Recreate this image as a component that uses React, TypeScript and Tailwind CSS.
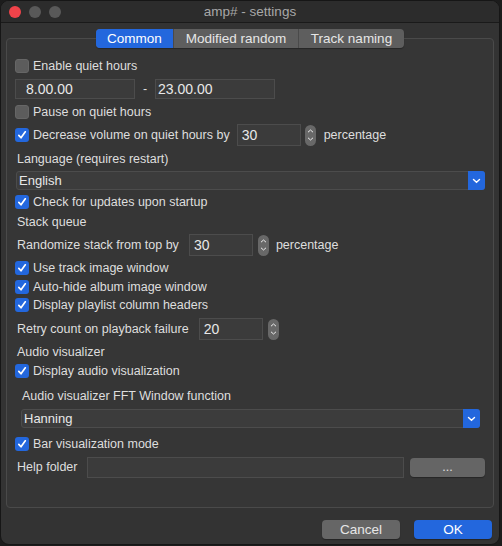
import { ReactNode } from "react";

const FONT = "font-['Liberation_Sans',Arial,sans-serif]";

const Check = ({ on }: { on?: boolean }) => {
  if (!on) {
    return (
      <div className="w-[14px] h-[14px] shrink-0 rounded-[3px] bg-[#5c5c5c] border border-[#666666]"></div>
    );
  }
  return (
    <div className="w-[14px] h-[14px] shrink-0 rounded-[3px] bg-[#2367dd] flex items-center justify-center">
      <svg width="10" height="10" viewBox="0 0 10 10">
        <path
          d="M1.8 5.4 L4 7.8 L8.3 1.8"
          fill="none"
          stroke="#fff"
          strokeWidth="1.7"
          strokeLinecap="round"
          strokeLinejoin="round"
        />
      </svg>
    </div>
  );
};

const CheckRow = ({
  on,
  label,
  className = "",
}: {
  on?: boolean;
  label: string;
  className?: string;
}) => (
  <div className={`flex items-center h-[18px] gap-[4px] ${className}`}>
    <Check on={on} />
    <span>{label}</span>
  </div>
);

// text box; value text is drawn a bit larger than labels, as in the dialog
const Field = ({
  value,
  className = "",
}: {
  value?: string;
  className?: string;
}) => (
  <div
    className={`flex items-center bg-[#3b3b3b] border border-[#4c4c4c] text-[14px] text-[#e8e8e8] ${className}`}
  >
    {value}
  </div>
);

const Spinner = () => (
  <div className="w-[11px] h-[21px] rounded-full bg-[#686868] flex flex-col items-center justify-center gap-[4px]">
    <svg width="7" height="4" viewBox="0 0 7 4">
      <path d="M1 3.2 L3.5 1 L6 3.2" fill="none" stroke="#ececec" strokeWidth="1" />
    </svg>
    <svg width="7" height="4" viewBox="0 0 7 4">
      <path d="M1 0.8 L3.5 3 L6 0.8" fill="none" stroke="#ececec" strokeWidth="1" />
    </svg>
  </div>
);

const Combo = ({ value, className = "" }: { value: string; className?: string }) => (
  <div
    className={`flex items-center h-[19px] bg-[#3c3c3c] border border-[#4c4c4c] rounded-[3px] ${className}`}
  >
    <span className="flex-1 pl-[2px] text-[13px] text-[#e8e8e8]">{value}</span>
    <div className="w-[17px] h-[19px] -mr-px rounded-r-[3px] bg-[#2367dd] flex items-center justify-center">
      <svg width="9" height="6" viewBox="0 0 9 6">
        <path
          d="M1.5 1.5 L4.5 4.3 L7.5 1.5"
          fill="none"
          stroke="#fff"
          strokeWidth="1.4"
          strokeLinecap="round"
        />
      </svg>
    </div>
  </div>
);

const Row = ({ children, className = "" }: { children: ReactNode; className?: string }) => (
  <div className={`flex items-center ${className}`}>{children}</div>
);

const Tab = ({ label, active, w }: { label: string; active?: boolean; w: string }) => (
  <div
    className={`h-[19px] flex items-center justify-center border-r border-[#4a4a4a] last:border-r-0 ${w} ${
      active ? "bg-[#2367dd] text-white" : "text-[#e6e6e6]"
    }`}
  >
    {label}
  </div>
);

export default function App() {
  return (
    <div
      className={`w-[502px] h-[546px] bg-[#1c1c1c] text-[12.5px] leading-none text-[#dedede] ${FONT}`}
    >
      <div className="w-[500px] h-[545px] rounded-[9px] bg-[#333333] border border-[#161616] overflow-hidden flex flex-col">
        {/* title bar */}
        <div className="h-[22px] shrink-0 bg-[#2c2c2c] border-b border-[#1a1a1a] flex items-center relative">
          <div className="flex gap-[8px] pl-[8px]">
            <div className="w-[12px] h-[12px] rounded-full bg-[#f0434a]"></div>
            <div className="w-[12px] h-[12px] rounded-full bg-[#595959]"></div>
            <div className="w-[12px] h-[12px] rounded-full bg-[#595959]"></div>
          </div>
          <div className="absolute inset-0 flex items-center justify-center text-[13.5px] text-[#a8a8a8]">
            amp# - settings
          </div>
        </div>

        <div className="px-[5px] pt-[6px] flex flex-col">
          {/* tabs */}
          <div className="flex justify-center relative z-10 -mb-[10px] text-[13.5px]">
            <div className="flex bg-[#5e5e5e] rounded-[4px] overflow-hidden shadow-[0_1px_1px_rgba(0,0,0,0.3)]">
              <Tab label="Common" active w="w-[78px]" />
              <Tab label="Modified random" w="w-[125px]" />
              <Tab label="Track naming" w="w-[105px]" />
            </div>
          </div>

          {/* group box */}
          <div className="h-[470px] border border-[#4a4a4a] rounded-[4px] bg-[#363636] pl-[8px] pr-[8px] pt-[18px] flex flex-col">
            <CheckRow label="Enable quiet hours" />
            <Row className="mt-[4px] h-[20px]">
              <Field value="8.00.00" className="w-[120px] h-[20px] pl-[10px]" />
              <span className="w-[20px] text-center">-</span>
              <Field value="23.00.00" className="w-[120px] h-[20px] pl-[2px]" />
            </Row>
            <CheckRow label="Pause on quiet hours" className="mt-[4px]" />
            <Row className="mt-[3px] h-[22px]">
              <CheckRow on label="Decrease volume on quiet hours by" />
              <Field value="30" className="ml-[7px] w-[64px] h-[22px] pl-[4px]" />
              <div className="ml-[4px]">
                <Spinner />
              </div>
              <span className="ml-[8px]">percentage</span>
            </Row>
            <Row className="mt-[4px] h-[18px] pl-[2px]">Language (requires restart)</Row>
            <Combo value="English" className="mt-[3px] ml-px" />
            <CheckRow on label="Check for updates upon startup" className="mt-[3px]" />
            <Row className="mt-[2px] h-[18px] pl-[2px]">Stack queue</Row>
            <Row className="mt-[3px] h-[22px] pl-[2px]">
              <span>Randomize stack from top by</span>
              <Field value="30" className="ml-[10px] w-[64px] h-[22px] pl-[4px]" />
              <div className="ml-[5px]">
                <Spinner />
              </div>
              <span className="ml-[7px]">percentage</span>
            </Row>
            <CheckRow on label="Use track image window" className="mt-[3px]" />
            <CheckRow on label="Auto-hide album image window" className="mt-[1px]" />
            <CheckRow on label="Display playlist column headers" />
            <Row className="mt-[4px] h-[22px] pl-[2px]">
              <span>Retry count on playback failure</span>
              <Field value="20" className="ml-[10px] w-[64px] h-[22px] pl-[4px]" />
              <div className="ml-[5px]">
                <Spinner />
              </div>
            </Row>
            <Row className="mt-[3px] h-[18px] pl-[2px]">Audio visualizer</Row>
            <CheckRow on label="Display audio visualization" className="mt-[1px]" />
            <Row className="mt-[7px] h-[18px] pl-[7px]">Audio visualizer FFT Window function</Row>
            <Combo value="Hanning" className="mt-[4px] ml-[6px] mr-[5px]" />
            <CheckRow on label="Bar visualization mode" className="mt-[7px]" />
            <Row className="mt-[4px] h-[21px] pl-[2px]">
              <span className="w-[70px]">Help folder</span>
              <Field className="w-[317px] h-[21px]" />
              <div className="ml-[6px] flex-1 h-[19px] rounded-[4px] bg-[#656565] flex items-center justify-center text-[#e0e0e0] shadow-[0_1px_1px_rgba(0,0,0,0.3)]">
                ...
              </div>
            </Row>
          </div>

          {/* buttons */}
          <div className="flex justify-end gap-[14px] mt-[12px] pr-[2px] text-[13.5px]">
            <div className="w-[78px] h-[19px] rounded-[4px] bg-[#666666] text-[#e6e6e6] flex items-center justify-center shadow-[0_1px_1px_rgba(0,0,0,0.3)]">
              Cancel
            </div>
            <div className="w-[78px] h-[19px] rounded-[4px] bg-[#2367dd] text-white flex items-center justify-center shadow-[0_1px_1px_rgba(0,0,0,0.3)]">
              OK
            </div>
          </div>
        </div>
      </div>
    </div>
  );
}
